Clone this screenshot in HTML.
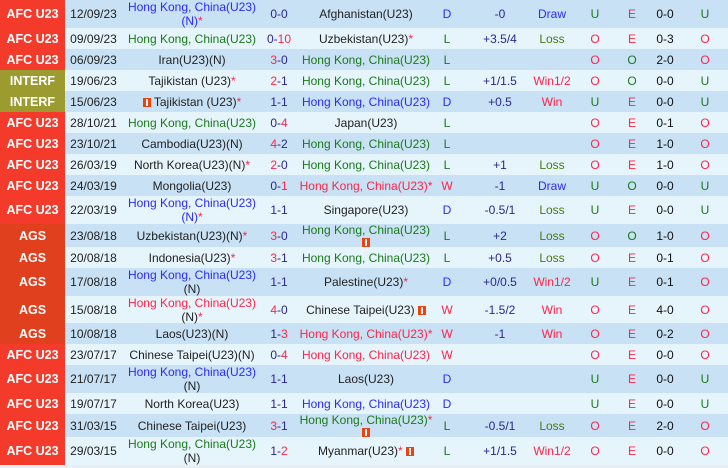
<!DOCTYPE html>
<html><head><meta charset="utf-8">
<style>
*{margin:0;padding:0;box-sizing:border-box}
body{width:728px;height:468px;background:#e9eef2;font-family:"Liberation Sans",Arial,sans-serif;font-size:12px;overflow:hidden}
.r{display:grid;grid-template-columns:65px 57px 140px 34px 140px 22px 72px 44px 42px 32px 34px 46px;align-items:center;text-align:center;line-height:14px;color:#222}
.a{background:#c8e1f4}.p{background:#e6f4fc}
.r>div{white-space:nowrap}
.lg{color:#fff;font-weight:bold;font-size:12.5px;height:100%;display:flex;align-items:center;justify-content:center}
.afc{background:#f33a2b}.int{background:#9c9b30}.ags{background:#e0401e}
.h{padding-left:12px}
.b{color:#2a2aff}.g{color:#1a7a1a}.rd{color:#ff2448}.n{color:#2b2690}.ol{color:#4a7a10}
.s{color:#ff2448}
.f{display:inline-block;width:8px;height:9px;background:#f04010;position:relative;vertical-align:-1px}
.f:after{content:"";position:absolute;left:3px;top:1px;width:2px;height:7px;background:#fff}
.ht{color:#111}
</style></head><body>

<div class="r a" style="height:28px"><div class="lg afc">AFC U23</div><div>12/09/23</div><div class="b">Hong Kong, China(U23)<br>(N)<span class="s">*</span></div><div class="n">0-0</div><div>Afghanistan(U23)</div><div class="b">D</div><div class="h n">-0</div><div class="b">Draw</div><div class="g">U</div><div class="rd">E</div><div class="ht">0-0</div><div class="g">U</div></div>
<div class="r p" style="height:21px"><div class="lg afc">AFC U23</div><div>09/09/23</div><div class="g">Hong Kong, China(U23)</div><div class="n">0-<span class="rd">10</span></div><div>Uzbekistan(U23)<span class="s">*</span></div><div class="g">L</div><div class="h n">+3.5/4</div><div class="ol">Loss</div><div class="rd">O</div><div class="rd">E</div><div class="ht">0-3</div><div class="rd">O</div></div>
<div class="r a" style="height:21px"><div class="lg afc">AFC U23</div><div>06/09/23</div><div>Iran(U23)(N)</div><div class="n"><span class="rd">3</span>-0</div><div class="g">Hong Kong, China(U23)</div><div class="g">L</div><div class="h"></div><div></div><div class="rd">O</div><div class="g">O</div><div class="ht">2-0</div><div class="rd">O</div></div>
<div class="r p" style="height:21px"><div class="lg int">INTERF</div><div>19/06/23</div><div>Tajikistan (U23)<span class="s">*</span></div><div class="n"><span class="rd">2</span>-1</div><div class="g">Hong Kong, China(U23)</div><div class="g">L</div><div class="h n">+1/1.5</div><div class="rd">Win1/2</div><div class="rd">O</div><div class="g">O</div><div class="ht">0-0</div><div class="g">U</div></div>
<div class="r a" style="height:21px"><div class="lg int">INTERF</div><div>15/06/23</div><div><span class="f"></span> Tajikistan (U23)<span class="s">*</span></div><div class="n">1-1</div><div class="b">Hong Kong, China(U23)</div><div class="b">D</div><div class="h n">+0.5</div><div class="rd">Win</div><div class="g">U</div><div class="rd">E</div><div class="ht">0-0</div><div class="g">U</div></div>
<div class="r p" style="height:21px"><div class="lg afc">AFC U23</div><div>28/10/21</div><div class="g">Hong Kong, China(U23)</div><div class="n">0-<span class="rd">4</span></div><div>Japan(U23)</div><div class="g">L</div><div class="h"></div><div></div><div class="rd">O</div><div class="rd">E</div><div class="ht">0-1</div><div class="rd">O</div></div>
<div class="r a" style="height:21px"><div class="lg afc">AFC U23</div><div>23/10/21</div><div>Cambodia(U23)(N)</div><div class="n"><span class="rd">4</span>-2</div><div class="g">Hong Kong, China(U23)</div><div class="g">L</div><div class="h"></div><div></div><div class="rd">O</div><div class="rd">E</div><div class="ht">1-0</div><div class="rd">O</div></div>
<div class="r p" style="height:21px"><div class="lg afc">AFC U23</div><div>26/03/19</div><div>North Korea(U23)(N)<span class="s">*</span></div><div class="n"><span class="rd">2</span>-0</div><div class="g">Hong Kong, China(U23)</div><div class="g">L</div><div class="h n">+1</div><div class="ol">Loss</div><div class="rd">O</div><div class="rd">E</div><div class="ht">1-0</div><div class="rd">O</div></div>
<div class="r a" style="height:21px"><div class="lg afc">AFC U23</div><div>24/03/19</div><div>Mongolia(U23)</div><div class="n">0-<span class="rd">1</span></div><div class="rd">Hong Kong, China(U23)*</div><div class="rd">W</div><div class="h n">-1</div><div class="b">Draw</div><div class="g">U</div><div class="g">O</div><div class="ht">0-0</div><div class="g">U</div></div>
<div class="r p" style="height:28px"><div class="lg afc">AFC U23</div><div>22/03/19</div><div class="b">Hong Kong, China(U23)<br>(N)<span class="s">*</span></div><div class="n">1-1</div><div>Singapore(U23)</div><div class="b">D</div><div class="h n">-0.5/1</div><div class="ol">Loss</div><div class="g">U</div><div class="rd">E</div><div class="ht">0-0</div><div class="g">U</div></div>
<div class="r a" style="height:23px"><div class="lg ags">AGS</div><div>23/08/18</div><div>Uzbekistan(U23)(N)<span class="s">*</span></div><div class="n"><span class="rd">3</span>-0</div><div class="g" style="line-height:12px">Hong Kong, China(U23)<br><span class="f"></span></div><div class="g">L</div><div class="h n">+2</div><div class="ol">Loss</div><div class="rd">O</div><div class="g">O</div><div class="ht">1-0</div><div class="rd">O</div></div>
<div class="r p" style="height:21px"><div class="lg ags">AGS</div><div>20/08/18</div><div>Indonesia(U23)<span class="s">*</span></div><div class="n"><span class="rd">3</span>-1</div><div class="g">Hong Kong, China(U23)</div><div class="g">L</div><div class="h n">+0.5</div><div class="ol">Loss</div><div class="rd">O</div><div class="rd">E</div><div class="ht">0-1</div><div class="rd">O</div></div>
<div class="r a" style="height:28px"><div class="lg ags">AGS</div><div>17/08/18</div><div class="b">Hong Kong, China(U23)<br><span style="color:#222">(N)</span></div><div class="n">1-1</div><div>Palestine(U23)<span class="s">*</span></div><div class="b">D</div><div class="h n">+0/0.5</div><div class="rd">Win1/2</div><div class="g">U</div><div class="rd">E</div><div class="ht">0-1</div><div class="rd">O</div></div>
<div class="r p" style="height:27px"><div class="lg ags">AGS</div><div>15/08/18</div><div class="rd">Hong Kong, China(U23)<br><span style="color:#222">(N)</span>*</div><div class="n"><span class="rd">4</span>-0</div><div>Chinese Taipei(U23) <span class="f"></span></div><div class="rd">W</div><div class="h n">-1.5/2</div><div class="rd">Win</div><div class="rd">O</div><div class="rd">E</div><div class="ht">4-0</div><div class="rd">O</div></div>
<div class="r a" style="height:21px"><div class="lg ags">AGS</div><div>10/08/18</div><div>Laos(U23)(N)</div><div class="n">1-<span class="rd">3</span></div><div class="rd">Hong Kong, China(U23)*</div><div class="rd">W</div><div class="h n">-1</div><div class="rd">Win</div><div class="rd">O</div><div class="rd">E</div><div class="ht">0-2</div><div class="rd">O</div></div>
<div class="r p" style="height:21px"><div class="lg afc">AFC U23</div><div>23/07/17</div><div>Chinese Taipei(U23)(N)</div><div class="n">0-<span class="rd">4</span></div><div class="rd">Hong Kong, China(U23)</div><div class="rd">W</div><div class="h"></div><div></div><div class="rd">O</div><div class="rd">E</div><div class="ht">0-0</div><div class="rd">O</div></div>
<div class="r a" style="height:28px"><div class="lg afc">AFC U23</div><div>21/07/17</div><div class="b">Hong Kong, China(U23)<br><span style="color:#222">(N)</span></div><div class="n">1-1</div><div>Laos(U23)</div><div class="b">D</div><div class="h"></div><div></div><div class="g">U</div><div class="rd">E</div><div class="ht">0-0</div><div class="g">U</div></div>
<div class="r p" style="height:21px"><div class="lg afc">AFC U23</div><div>19/07/17</div><div>North Korea(U23)</div><div class="n">1-1</div><div class="b">Hong Kong, China(U23)</div><div class="b">D</div><div class="h"></div><div></div><div class="g">U</div><div class="rd">E</div><div class="ht">0-0</div><div class="g">U</div></div>
<div class="r a" style="height:23px"><div class="lg afc">AFC U23</div><div>31/03/15</div><div>Chinese Taipei(U23)</div><div class="n"><span class="rd">3</span>-1</div><div class="g" style="line-height:12px">Hong Kong, China(U23)<span class="s">*</span><br><span class="f"></span></div><div class="g">L</div><div class="h n">-0.5/1</div><div class="ol">Loss</div><div class="rd">O</div><div class="rd">E</div><div class="ht">2-0</div><div class="rd">O</div></div>
<div class="r p" style="height:28px"><div class="lg afc">AFC U23</div><div>29/03/15</div><div class="g">Hong Kong, China(U23)<br><span style="color:#222">(N)</span></div><div class="n">1-<span class="rd">2</span></div><div>Myanmar(U23)<span class="s">*</span> <span class="f"></span></div><div class="g">L</div><div class="h n">+1/1.5</div><div class="rd">Win1/2</div><div class="rd">O</div><div class="rd">E</div><div class="ht">0-0</div><div class="rd">O</div></div>

</body></html>
